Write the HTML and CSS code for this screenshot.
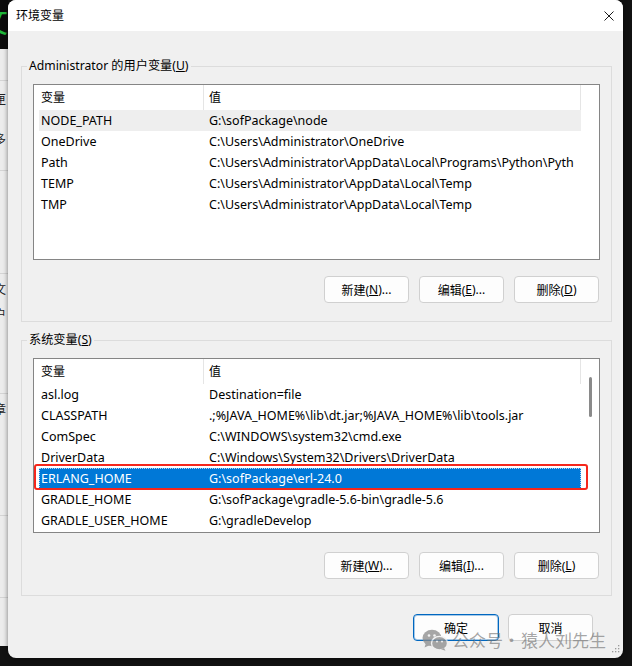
FILE: index.html
```html
<!DOCTYPE html>
<html lang="zh-CN">
<head>
<meta charset="utf-8">
<title>环境变量</title>
<link rel="stylesheet" href="styles.css">
</head>
<body>
<div class="screen">
  <div class="side">
    <div class="side-top"><span class="green-frag">文</span></div>
    <div class="side-panel">
      <div class="sec sec-a"></div>
      <div class="sec sec-b"><span class="frag">匣</span><span class="frag frag-gap">多</span></div>
      <div class="sec sec-c"><span class="frag">，</span></div>
      <div class="sec sec-d"><span class="frag">文</span><span class="frag frag-gap2">户</span></div>
      <div class="sec sec-e"><span class="frag">章</span><span class="frag frag-gap3">、</span></div>
      <div class="sec sec-f"></div>
      <div class="sec sec-g"></div>
    </div>
  </div>

  <div class="dialog">
    <div class="titlebar">
      <span class="title">环境变量</span>
      <svg class="close" viewBox="0 0 10 10" aria-hidden="true"><path d="M0.5 0.5 L9.5 9.5 M9.5 0.5 L0.5 9.5" stroke="#1b1b1b" stroke-width="1" fill="none"/></svg>
    </div>

    <div class="body">
      <fieldset class="group group-user">
        <legend>Administrator 的用户变量(<u>U</u>)</legend>
        <div class="inner">
          <div class="list list-user">
            <div class="list-main">
              <div class="list-head"><div class="hc hc-name">变量</div><div class="hc hc-value">值</div></div>
              <div class="rows">
                <div class="row row-hover"><span class="c-name">NODE_PATH</span><span class="c-value">G:\sofPackage\node</span></div>
                <div class="row"><span class="c-name">OneDrive</span><span class="c-value">C:\Users\Administrator\OneDrive</span></div>
                <div class="row"><span class="c-name">Path</span><span class="c-value">C:\Users\Administrator\AppData\Local\Programs\Python\Python39\Scripts\</span></div>
                <div class="row"><span class="c-name">TEMP</span><span class="c-value">C:\Users\Administrator\AppData\Local\Temp</span></div>
                <div class="row"><span class="c-name">TMP</span><span class="c-value">C:\Users\Administrator\AppData\Local\Temp</span></div>
              </div>
            </div>
            <div class="vscroll"></div>
          </div>
          <div class="btns">
            <button class="btn">新建(<u>N</u>)...</button>
            <button class="btn">编辑(<u>E</u>)...</button>
            <button class="btn">删除(<u>D</u>)</button>
          </div>
        </div>
      </fieldset>

      <fieldset class="group group-sys">
        <legend>系统变量(<u>S</u>)</legend>
        <div class="inner">
          <div class="list list-sys">
            <div class="list-main">
              <div class="list-head"><div class="hc hc-name">变量</div><div class="hc hc-value">值</div></div>
              <div class="rows">
                <div class="row"><span class="c-name">asl.log</span><span class="c-value">Destination=file</span></div>
                <div class="row"><span class="c-name">CLASSPATH</span><span class="c-value">.;%JAVA_HOME%\lib\dt.jar;%JAVA_HOME%\lib\tools.jar</span></div>
                <div class="row"><span class="c-name">ComSpec</span><span class="c-value">C:\WINDOWS\system32\cmd.exe</span></div>
                <div class="row"><span class="c-name">DriverData</span><span class="c-value">C:\Windows\System32\Drivers\DriverData</span></div>
                <div class="row row-selected"><span class="c-name">ERLANG_HOME</span><span class="c-value">G:\sofPackage\erl-24.0</span></div>
                <div class="row"><span class="c-name">GRADLE_HOME</span><span class="c-value">G:\sofPackage\gradle-5.6-bin\gradle-5.6</span></div>
                <div class="row"><span class="c-name">GRADLE_USER_HOME</span><span class="c-value">G:\gradleDevelop</span></div>
                <div class="row"><span class="c-name">JAVA_HOME</span><span class="c-value">C:\Program Files\Java\jdk1.8.0</span></div>
              </div>
            </div>
            <div class="vscroll"><div class="thumb"></div></div>
          </div>
          <div class="btns btns-sys">
            <button class="btn">新建(<u>W</u>)...</button>
            <button class="btn">编辑(<u>I</u>)...</button>
            <button class="btn">删除(<u>L</u>)</button>
          </div>
        </div>
      </fieldset>

      <div class="footer">
        <button class="btn btn-ok">确定</button>
        <button class="btn">取消</button>
      </div>
    </div>

    <div class="watermark">
      <svg class="wm-icon" viewBox="0 0 26 22" aria-hidden="true">
        <ellipse cx="10" cy="9" rx="9.5" ry="8.2" fill="#8a8a8a"/>
        <path d="M4 14 L2.5 18.5 L8 16 Z" fill="#8a8a8a"/>
        <ellipse cx="17.5" cy="14.2" rx="8" ry="6.8" fill="#8a8a8a" stroke="#f0f0f0" stroke-width="1.4"/>
        <path d="M22 19 L23.5 21.8 L19 20.2 Z" fill="#8a8a8a"/>
        <circle cx="7" cy="6.5" r="1.3" fill="#f0f0f0"/>
        <circle cx="12.5" cy="6.5" r="1.3" fill="#f0f0f0"/>
        <circle cx="15" cy="12.5" r="1" fill="#f0f0f0"/>
        <circle cx="20" cy="12.5" r="1" fill="#f0f0f0"/>
      </svg>
      <span class="wm-text">公众号</span><span class="wm-dot">·</span><span class="wm-text">猿人刘先生</span>
    </div>

    <svg class="grip" viewBox="0 0 8 8" aria-hidden="true">
      <rect x="6" y="0" width="1.3" height="1.3" fill="#9a9a9a"/>
      <rect x="3" y="3" width="1.3" height="1.3" fill="#9a9a9a"/>
      <rect x="6" y="3" width="1.3" height="1.3" fill="#9a9a9a"/>
      <rect x="0" y="6" width="1.3" height="1.3" fill="#9a9a9a"/>
      <rect x="3" y="6" width="1.3" height="1.3" fill="#9a9a9a"/>
      <rect x="6" y="6" width="1.3" height="1.3" fill="#9a9a9a"/>
    </svg>
  </div>
</div>
</body>
</html>
```

FILE: styles.css
```css
* { box-sizing: border-box; }
html, body { margin: 0; padding: 0; }
body {
  width: 632px;
  height: 666px;
  overflow: hidden;
  background: #111111;
  font-family: "Noto Sans", "Noto Sans CJK SC", sans-serif;
  font-size: 12.5px;
  color: #000;
}
u { text-decoration: underline; text-underline-offset: 1px; }

.screen { display: flex; width: 632px; height: 666px; }

/* background window fragment on the left */
.side { width: 8px; flex: none; display: flex; flex-direction: column; overflow: hidden; }
.side-top { height: 49px; background: #0c0c0c; overflow: hidden; }
.green-frag {
  display: block; margin-left: -22px; margin-top: 5px;
  font-size: 30px; line-height: 32px; color: #1fb83a; white-space: nowrap;
}
.side-panel { height: 597px; background: #ececec; display: flex; flex-direction: column; }
.sec { border-bottom: 1px solid #d4d4d4; display: flex; flex-direction: column; overflow: hidden; }
.sec-a { height: 32px; }
.sec-b { height: 90px; padding-top: 11px; }
.sec-c { height: 103px; padding-top: 19px; }
.sec-d { height: 120px; padding-top: 8px; }
.sec-e { height: 122px; padding-top: 8px; }
.sec-f { height: 82px; }
.sec-g { height: 48px; border-bottom: 0; }
.frag { display: block; height: 16px; line-height: 16px; margin-left: -6px; white-space: nowrap; color: #222; font-size: 12px; }
.frag-gap { margin-top: 24px; }
.frag-gap2 { margin-top: 9px; }
.frag-gap3 { margin-top: 14px; }

/* dialog */
.dialog {
  width: 615px;
  height: 658px;
  flex: none;
  position: relative;
  display: flex;
  flex-direction: column;
  background: #f0f0f0;
  border-radius: 8px;
  overflow: hidden;
  box-shadow: 0 0 5px rgba(0, 0, 0, 0.5);
}
.titlebar {
  height: 31px;
  flex: none;
  background: #ffffff;
  display: flex;
  align-items: center;
  justify-content: space-between;
  padding: 0 9px 0 8px;
}
.title { line-height: 16px; font-size: 12px; }
.close { width: 10px; height: 10px; display: block; }

.body { padding: 27px 11px 0 13px; display: flex; flex-direction: column; }

.group {
  margin: 0;
  min-width: 0;
  border: 1px solid #dcdcdc;
  padding: 10px 11px 18px 5px;
}
.group legend { padding: 0 2px; line-height: 16px; height: 16px; color: #000; font-size: 12.2px; }
.group-sys { margin-top: 10px; padding-bottom: 16px; }
.inner { margin-left: 6px; }

.list {
  height: 176px;
  border: 1px solid #858585;
  background: #ffffff;
  display: flex;
  overflow: hidden;
}
.list-sys { height: 175px; }
.list-main { flex: 1; min-width: 0; display: flex; flex-direction: column; }
.vscroll { width: 18px; flex: none; padding-top: 18px; }
.thumb { width: 3px; height: 40px; margin-left: 8px; border-radius: 2px; background: #8a8a8a; }

.list-head { height: 25px; flex: none; display: flex; font-size: 12px; }
.hc { height: 25px; line-height: 25px; border-right: 1px solid #e5e5e5; white-space: nowrap; }
.hc-name { width: 170px; padding-left: 7px; }
.hc-value { flex: 1; padding-left: 5px; }

.rows { padding-left: 5px; display: flex; flex-direction: column; }
.row { height: 21px; flex: none; display: flex; align-items: center; white-space: nowrap; line-height: 21px; padding-right: 7px; position: relative; }
.c-name { width: 168px; flex: none; padding-left: 2px; }
.c-value { flex: 1; min-width: 0; overflow: hidden; padding-left: 2px; }
.row-hover { background: #eeeeee; }
.row-selected { background: #0078d7; color: #ffffff; outline: 1px dotted rgba(255,255,255,0.7); outline-offset: -1px; }
.row-selected::after {
  content: "";
  position: absolute;
  left: -5px; right: -7px; top: -4px; bottom: -1px;
  border: 2.5px solid #f5271c;
  border-radius: 3px;
}

.btns { display: flex; justify-content: flex-end; gap: 10px; margin-top: 16px; padding-right: 1px; }
.btns-sys { margin-top: 19px; }
.btn {
  width: 85px;
  height: 27px;
  padding: 0;
  background: #fdfdfd;
  border: 1px solid #d0d0d0;
  border-radius: 4px;
  font: inherit;
  font-size: 12px;
  color: #000;
  display: flex;
  align-items: center;
  justify-content: center;
}
.footer { display: flex; justify-content: flex-end; gap: 9px; margin-top: 18px; padding-right: 19px; }
.btn-ok { width: 86px; border-color: #0067c0; box-shadow: inset 0 0 0 1px rgba(0, 103, 192, 0.35); }

/* watermark overlay */
.watermark {
  position: absolute;
  left: 414px;
  top: 628px;
  display: flex;
  align-items: center;
  color: rgba(115, 115, 115, 0.65);
  font-family: "Noto Sans CJK SC", sans-serif;
  font-size: 17px;
  line-height: 24px;
  white-space: nowrap;
}
.wm-icon { width: 26px; height: 22px; margin-right: 4px; opacity: 0.75; }
.wm-dot { margin: 0 1px 0 0; }

.grip { position: absolute; right: 3px; bottom: 5px; width: 8px; height: 8px; }
```
